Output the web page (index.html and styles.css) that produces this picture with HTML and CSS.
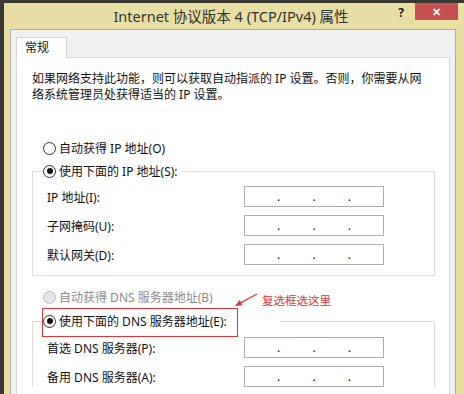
FILE: index.html
```html
<!DOCTYPE html>
<html lang="zh-CN">
<head>
	<meta charset="UTF-8">
	<title>Internet 协议版本 4 (TCP/IPv4) 属性</title>
	<link rel="stylesheet" href="styles.css">
</head>
<body>
	<div class="window">
		<div class="titlebar">
			<span></span>
			<span class="title">Internet 协议版本 4 (TCP/IPv4) 属性</span>
			<div class="controls">
				<span class="help">?</span>
				<span class="close">&#x2715;</span>
			</div>
		</div>
		<div class="client">
			<div class="tabs"><span class="tab">常规</span></div>
			<div class="panel">
				<p class="desc">如果网络支持此功能，则可以获取自动指派的 IP 设置。否则，你需要从网<br>络系统管理员处获得适当的 IP 设置。</p>

				<div class="radio"><span class="dot"></span>自动获得 IP 地址(O)</div>
				<fieldset class="group">
					<legend class="radio"><span class="dot on"></span>使用下面的 IP 地址(S):</legend>
					<div class="fields">
						<span>IP 地址(I):</span>
						<span class="ip"><i>.</i><i>.</i><i>.</i></span>
						<span>子网掩码(U):</span>
						<span class="ip"><i>.</i><i>.</i><i>.</i></span>
						<span>默认网关(D):</span>
						<span class="ip"><i>.</i><i>.</i><i>.</i></span>
					</div>
				</fieldset>

				<div class="dns">
					<div class="radio off"><span class="dot"></span>自动获得 DNS 服务器地址(B)</div>
					<fieldset class="group group-dns">
						<legend class="radio wide"><span class="dot on"></span>使用下面的 DNS 服务器地址(E):</legend>
						<div class="fields">
							<span>首选 DNS 服务器(P):</span>
							<span class="ip"><i>.</i><i>.</i><i>.</i></span>
							<span>备用 DNS 服务器(A):</span>
							<span class="ip"><i>.</i><i>.</i><i>.</i></span>
						</div>
					</fieldset>

					<!-- 标注 -->
					<div class="mark"></div>
					<svg class="arrow" width="30" height="20" viewBox="0 0 30 20">
						<line x1="25" y1="5" x2="9" y2="13.6" stroke="#dc3539" stroke-width="1.2"/>
						<polygon points="3,17 10.5,16.3 7.7,11" fill="#dc3539"/>
					</svg>
					<span class="note">复选框选这里</span>
				</div>
			</div>
		</div>
	</div>
</body>
</html>
```

FILE: styles.css
```css
body{
	margin: 0;
	padding: 3px 0 0 4px;
	height: 394px;
	box-sizing: border-box;
	overflow: hidden;
	background: #3a3936;
	font-family: "Noto Sans", "Noto Sans CJK SC", sans-serif;
	font-size: 12px;
	color: #111;
}
.window{
	display: flex;
	flex-direction: column;
	height: 100%;
	background: #e9dea4;
}
.titlebar{
	display: grid;
	grid-template-columns: 1fr auto 1fr;
	align-items: start;
	height: 26px;
	flex: none;
	padding-right: 6px;
}
.title{
	padding-top: 3px;
	font-size: 14.5px;
	line-height: 20px;
	color: #333;
}
.controls{
	display: flex;
	justify-content: flex-end;
	align-items: flex-start;
	gap: 11px;
}
.help{
	padding-top: 4px;
	font-size: 12px;
	font-weight: bold;
	line-height: 12px;
	color: #222;
}
.close{
	width: 43px;
	height: 17px;
	line-height: 17px;
	text-align: center;
	background: #c75050;
	color: #fff;
	font-size: 11px;
	font-weight: bold;
}
.client{
	display: flex;
	flex-direction: column;
	flex: 1;
	min-height: 0;
	margin: 0 8px 0 6px;
	padding: 7px 5px 0 5px;
	border: 1px solid #aeaeae;
	border-bottom: 0;
	background: #f0f0f0;
}
.tabs{
	display: flex;
	flex: none;
}
.tab{
	position: relative;
	z-index: 1;
	height: 20px;
	line-height: 20px;
	margin-bottom: -1px;
	padding: 0 17px 0 8px;
	border: 1px solid #d4d4d4;
	border-bottom: 0;
	background: #fff;
}
.panel{
	flex: 1;
	min-height: 0;
	overflow: hidden;
	padding: 0 14px 0 15px;
	border: 1px solid #d9d9d9;
	border-bottom: 0;
	background: #fff;
}
.desc{
	margin: 13px 0 0;
	line-height: 16px;
}
.radio{
	display: flex;
	align-items: center;
	gap: 3px;
	height: 16px;
	margin: 37px 0 0 11px;
}
.dot{
	position: relative;
	width: 11px;
	height: 11px;
	border: 1px solid #333;
	border-radius: 50%;
	background: #fff;
}
.dot.on::after{
	content: "";
	position: absolute;
	left: 2.5px;
	top: 2.5px;
	width: 6px;
	height: 6px;
	border-radius: 50%;
	background: #111;
}
.radio.off{
	margin-top: 13px;
	color: #8a8a8a;
}
.radio.off .dot{
	border-color: #bdbdbd;
	background: #e6e6e6;
}
.group{
	margin: 7px 0 0;
	padding: 7px 0 10px 10px;
	border: 1px solid #dcdcdc;
}
.group legend.radio{
	margin: 0;
	padding: 0 3px 0 0;
}
.group legend.wide{
	width: 237px;
	box-sizing: border-box;
}
.group-dns{
	margin-top: 8px;
	padding-top: 8px;
	padding-bottom: 0;
	border-bottom: 0;
}
.fields{
	display: grid;
	grid-template-columns: 197px 140px;
	grid-auto-rows: 21px;
	row-gap: 8px;
	align-items: center;
	padding-left: 4px;
}
.ip{
	display: flex;
	justify-content: space-evenly;
	height: 21px;
	box-sizing: border-box;
	border: 1px solid #adadad;
	line-height: 19px;
}
.ip i{
	font-style: normal;
}
.dns{
	position: relative;
}
.mark{
	position: absolute;
	left: 10px;
	top: 19px;
	width: 196px;
	height: 29px;
	box-sizing: border-box;
	border: 1px solid #dc3539;
}
.arrow{
	position: absolute;
	left: 200px;
	top: 0;
}
.note{
	position: absolute;
	left: 230px;
	top: 4px;
	line-height: 16px;
	font-size: 11.5px;
	color: #d8343a;
}
```
